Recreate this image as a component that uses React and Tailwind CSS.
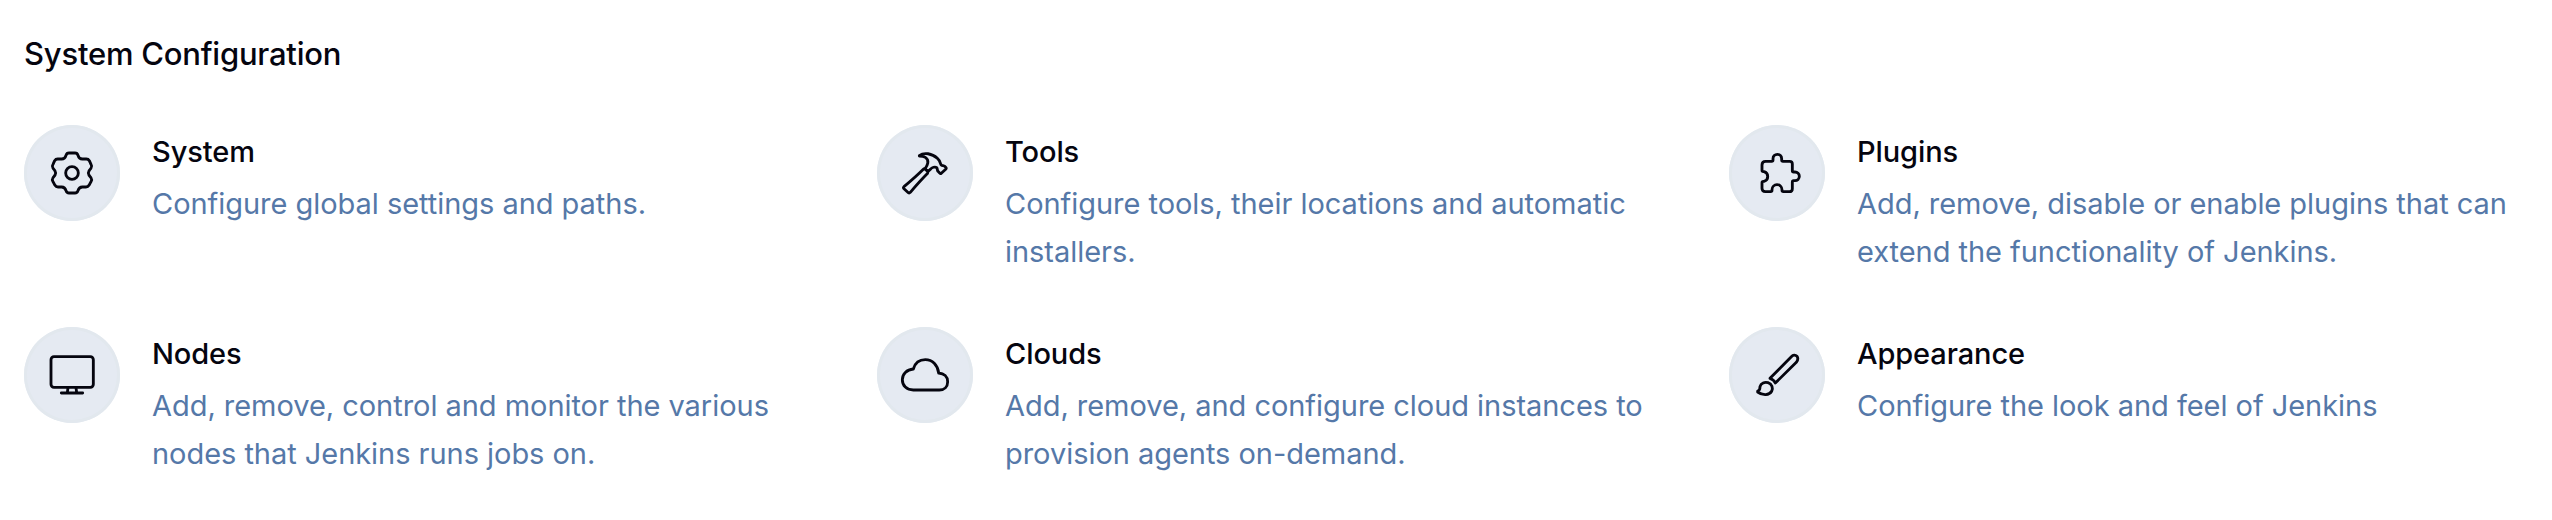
const icons = {
  gear: (
    <>
      <path d="M177 129H195Q202 129 204 136Q207 147 217 147H229Q235 147 238 152L243 163Q247 169 243 175Q235 183 235 189Q235 195 243 203Q247 209 243 215L237 226Q234 231 228 231H217Q207 231 204 242Q202 249 195 249H177Q170 249 168 242Q165 231 155 231H144Q138 231 135 226L129 215Q125 209 129 203Q137 195 137 189Q137 183 129 175Q125 169 129 163L134 152Q137 147 143 147H155Q165 147 168 136Q170 129 177 129Z" />
      <circle cx="186" cy="189" r="19" />
    </>
  ),
  hammer: (
    <>
      <path d="M169 137C183 126 207 130 223 145C234 155 231 162 235 165C238 168 242 166 245 169L248 172Q251 175 248 178L235 190Q232 192 230 189L225 184C222 180 224 177 221 173C216 169 207 172 202 178L195 184L186 177C193 167 201 151 187 142C181 138 176 138 169 138Z" />
      <path d="M181 178Q158 201 123 230Q120 233 123 236L136 248Q139 250 142 247Q172 212 194 190Q196 187 193 183L188 178Q184 175 181 178Z" />
    </>
  ),
  puzzle: (
    <path d="M149 154H167Q171 154 171 150V146A13 13 0 0 1 197 146V150Q197 154 201 154H221Q229 154 229 162V182Q229 186 233 186H237A13 13 0 0 1 237 212H233Q229 212 229 216V236Q229 245 220 245H202Q198 245 198 241V239A15 15 0 0 0 168 239V241Q168 245 164 245H148Q138 245 138 235V218Q138 214 142 214H144A15 15 0 0 0 144 185H142Q138 185 138 181V165Q138 154 149 154Z" />
  ),
  monitor: (
    <>
      <rect x="123" y="134" width="127" height="92" rx="9" />
      <path d="M174 227L172 242M198 227L200 242M154 243H218" />
    </>
  ),
  cloud: (
    <path d="M151 234C131 234 118 221 118 203C118 186 131 173 151 171C156 154 169 143 187 143C208 143 224 159 227 183C243 184 254 194 254 209C254 224 244 234 229 234Z" />
  ),
  brush: (
    <>
      <path d="M162 199L226 134C231 129 238 128 243 133C247 139 245 146 241 151L178 213Q174 203 162 199Z" />
      <path d="M125 237C132 235 132 229 132 224C135 213 146 209 156 212C168 216 172 228 167 238C160 250 141 252 125 240Z" />
    </>
  ),
};

const items = [
  { icon: "gear", viewBox: "42 45 288 288", title: "System", lines: ["Configure global settings and paths."] },
  { icon: "hammer", viewBox: "42 45 288 288", title: "Tools", lines: ["Configure tools, their locations and automatic", "installers."] },
  { icon: "puzzle", viewBox: "39 45 288 288", title: "Plugins", lines: ["Add, remove, disable or enable plugins that can", "extend the functionality of Jenkins."] },
  { icon: "monitor", viewBox: "42 45 288 288", title: "Nodes", lines: ["Add, remove, control and monitor the various", "nodes that Jenkins runs jobs on."] },
  { icon: "cloud", viewBox: "42 45 288 288", title: "Clouds", lines: ["Add, remove, and configure cloud instances to", "provision agents on-demand."] },
  { icon: "brush", viewBox: "39 45 288 288", title: "Appearance", lines: ["Configure the look and feel of Jenkins"] },
];

function Item({ icon, viewBox, title, lines }) {
  return (
    <a className="flex h-[202px] items-start gap-8">
      <span className="size-24 shrink-0 rounded-full bg-[#e5eaf2] ring-3 ring-inset ring-[#e2e8ee]">
        <svg viewBox={viewBox} className="size-24" fill="none" stroke="#05050f" strokeWidth="8.5" strokeLinecap="round" strokeLinejoin="round">
          {icons[icon]}
        </svg>
      </span>
      <dl className="pt-[3px] text-[29px] leading-12 whitespace-nowrap">
        <dt className="mb-1 font-medium tracking-[-0.1px] text-[#05050f]">{title}</dt>
        {lines.map((line) => (
          <dd key={line} className="tracking-[-0.04px] text-[#5578a8]">{line}</dd>
        ))}
      </dl>
    </a>
  );
}

export default function App() {
  return (
    <main className="h-[520px] w-[2552px] overflow-hidden bg-white pt-[30px] pl-6 font-['Inter',sans-serif]">
      <h2 className="mb-[47px] text-[31px] leading-12 font-medium tracking-[-0.22px] text-[#05050f]">System Configuration</h2>
      <section className="grid grid-cols-[853px_852px_auto]">
        {items.map((item) => (
          <Item key={item.title} {...item} />
        ))}
      </section>
    </main>
  );
}
